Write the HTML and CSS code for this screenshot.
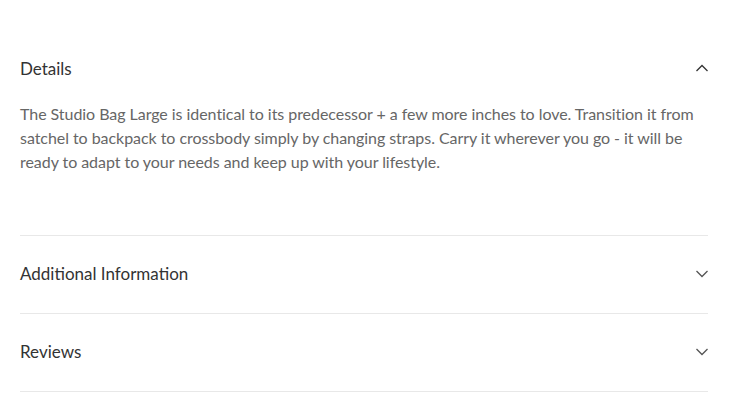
FILE: index.html
```html
<!DOCTYPE html>
<html>
<head>
<meta charset="utf-8">
<link rel="stylesheet" href="styles.css">
</head>
<body>
<div class="accordion">
  <section class="item open">
    <div class="head">
      <span class="title">Details</span>
      <svg class="chev" width="14" height="8" viewBox="0 0 14 8"><path d="M1.5 7 L7 1.5 L12.5 7" fill="none" stroke="#333" stroke-width="1.3"/></svg>
    </div>
    <div class="body">
      <p>The Studio Bag Large is identical to its predecessor + a few more inches to love. Transition it from satchel to backpack to crossbody simply by changing straps. Carry it wherever you go - it will be ready to adapt to your needs and keep up with your lifestyle.</p>
    </div>
  </section>
  <section class="item">
    <div class="head">
      <span class="title">Additional Information</span>
      <svg class="chev" width="14" height="8" viewBox="0 0 14 8"><path d="M1.5 1 L7 6.5 L12.5 1" fill="none" stroke="#555" stroke-width="1.3"/></svg>
    </div>
  </section>
  <section class="item">
    <div class="head">
      <span class="title">Reviews</span>
      <svg class="chev" width="14" height="8" viewBox="0 0 14 8"><path d="M1.5 1 L7 6.5 L12.5 1" fill="none" stroke="#555" stroke-width="1.3"/></svg>
    </div>
  </section>
</div>
</body>
</html>
```
FILE: styles.css
```css
html, body { margin: 0; padding: 0; background: #fff; }
body { font-family: "Lato", sans-serif; }
.accordion { padding: 38px 34px 0 20px; }
.item { border-bottom: 1px solid #e8e8e8; }
.item .head { height: 77px; display: flex; align-items: center; justify-content: space-between; padding-bottom: 2px; box-sizing: border-box; }
.item.open .head { height: 62px; padding-bottom: 2px; }
.title { font-size: 17px; color: #333; }
.chev { margin-right: -1px; }
.body { padding: 2px 0 61px; }
.body p { margin: 0; font-size: 16px; letter-spacing: -0.05px; line-height: 24px; color: #666; }
```
